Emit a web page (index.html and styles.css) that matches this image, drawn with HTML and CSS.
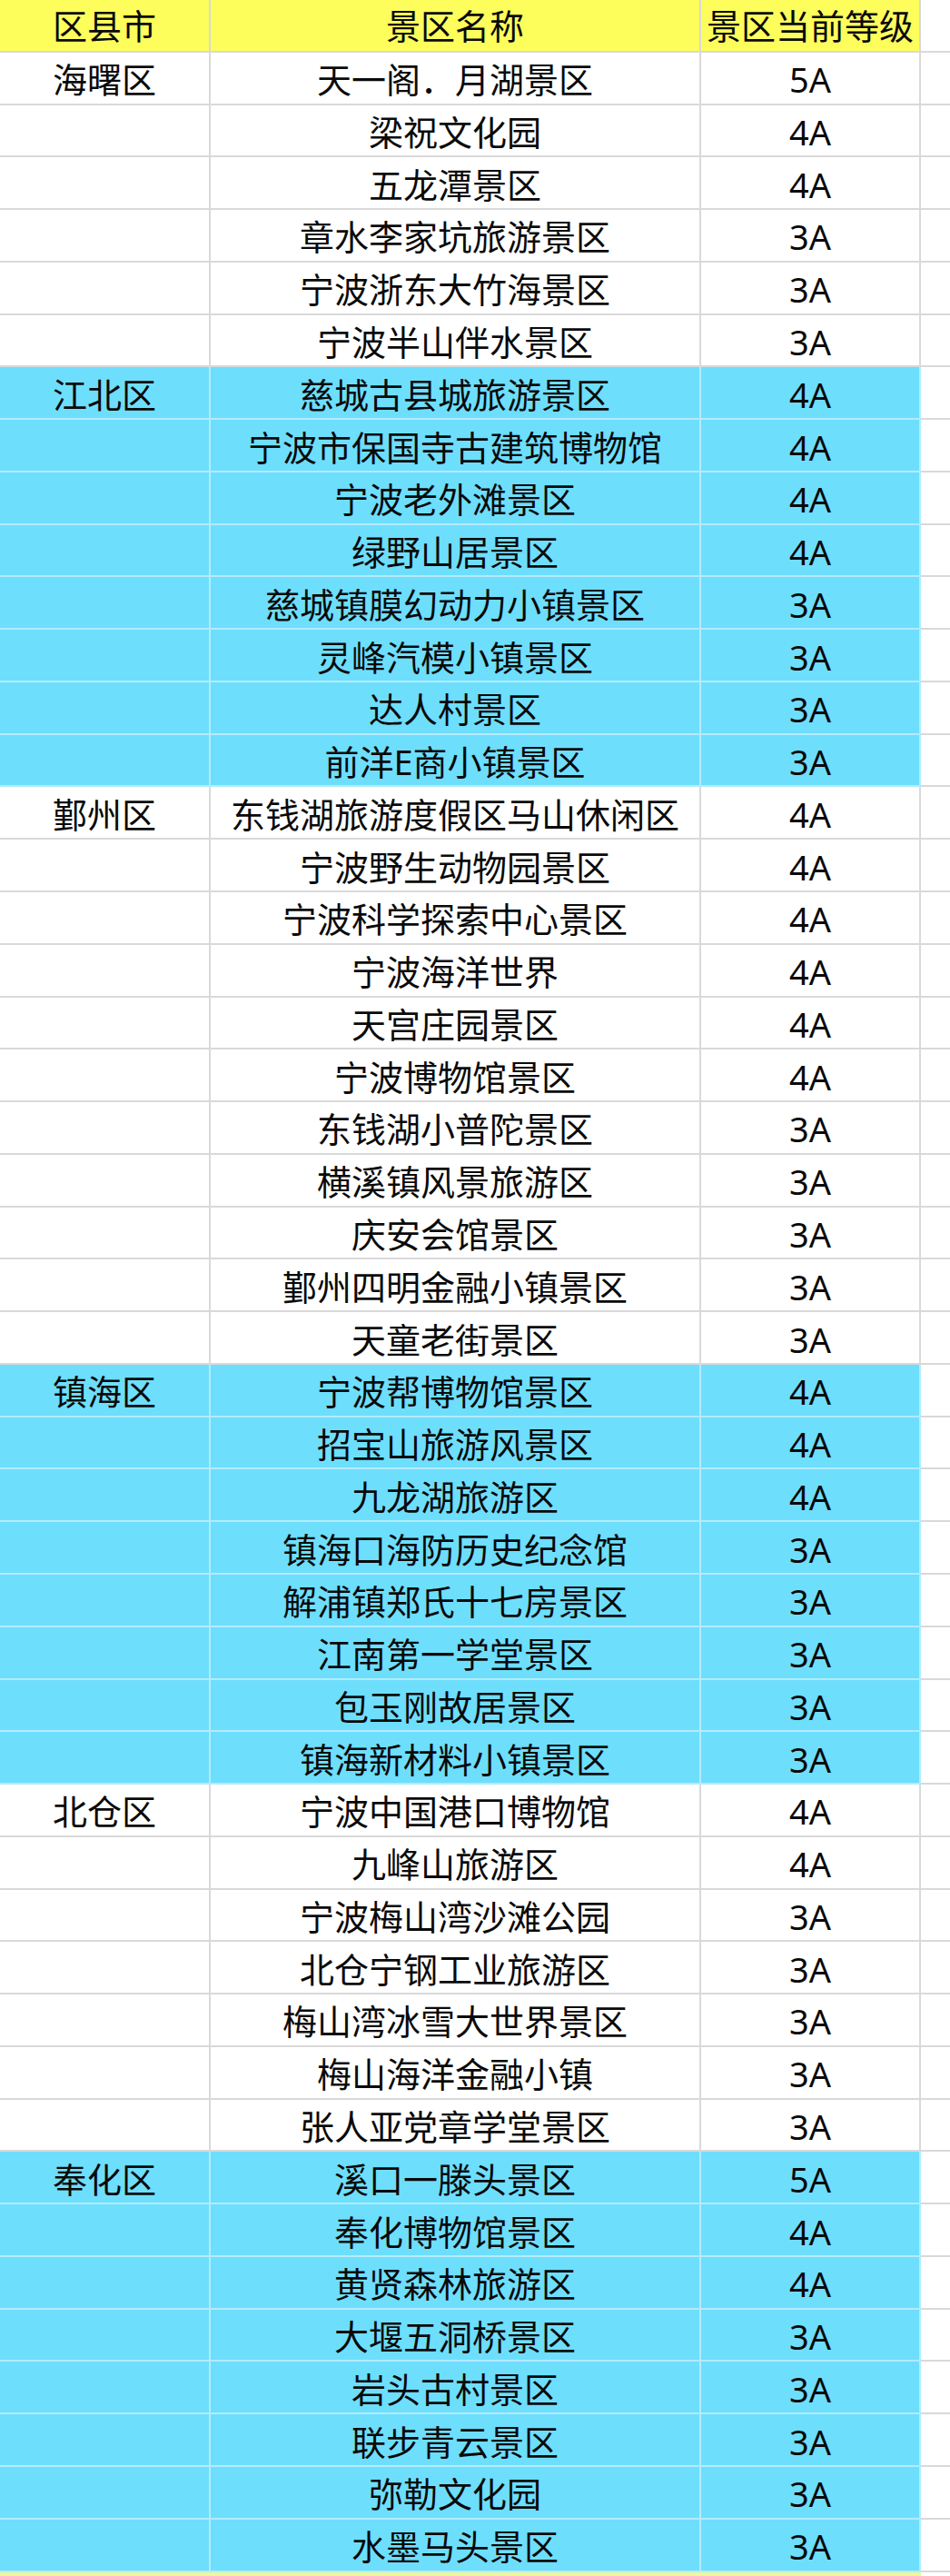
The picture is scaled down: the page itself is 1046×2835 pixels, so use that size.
FILE: index.html
```html
<!DOCTYPE html>
<html lang="zh-CN">
<head>
<meta charset="utf-8">
<title>宁波景区等级</title>
<link rel="stylesheet" href="styles.css">
</head>
<body>
<div class="sheet">
  <div class="row head"><div class="c">区县市</div><div class="c">景区名称</div><div class="c">景区当前等级</div><div class="c e"></div></div>

  <div class="row"><div class="c">海曙区</div><div class="c">天一阁．月湖景区</div><div class="c">5A</div><div class="c e"></div></div>
  <div class="row"><div class="c"></div><div class="c">梁祝文化园</div><div class="c">4A</div><div class="c e"></div></div>
  <div class="row"><div class="c"></div><div class="c">五龙潭景区</div><div class="c">4A</div><div class="c e"></div></div>
  <div class="row"><div class="c"></div><div class="c">章水李家坑旅游景区</div><div class="c">3A</div><div class="c e"></div></div>
  <div class="row"><div class="c"></div><div class="c">宁波浙东大竹海景区</div><div class="c">3A</div><div class="c e"></div></div>
  <div class="row"><div class="c"></div><div class="c">宁波半山伴水景区</div><div class="c">3A</div><div class="c e"></div></div>

  <div class="row blue"><div class="c">江北区</div><div class="c">慈城古县城旅游景区</div><div class="c">4A</div><div class="c e"></div></div>
  <div class="row blue"><div class="c"></div><div class="c">宁波市保国寺古建筑博物馆</div><div class="c">4A</div><div class="c e"></div></div>
  <div class="row blue"><div class="c"></div><div class="c">宁波老外滩景区</div><div class="c">4A</div><div class="c e"></div></div>
  <div class="row blue"><div class="c"></div><div class="c">绿野山居景区</div><div class="c">4A</div><div class="c e"></div></div>
  <div class="row blue"><div class="c"></div><div class="c">慈城镇膜幻动力小镇景区</div><div class="c">3A</div><div class="c e"></div></div>
  <div class="row blue"><div class="c"></div><div class="c">灵峰汽模小镇景区</div><div class="c">3A</div><div class="c e"></div></div>
  <div class="row blue"><div class="c"></div><div class="c">达人村景区</div><div class="c">3A</div><div class="c e"></div></div>
  <div class="row blue"><div class="c"></div><div class="c">前洋E商小镇景区</div><div class="c">3A</div><div class="c e"></div></div>

  <div class="row"><div class="c">鄞州区</div><div class="c">东钱湖旅游度假区马山休闲区</div><div class="c">4A</div><div class="c e"></div></div>
  <div class="row"><div class="c"></div><div class="c">宁波野生动物园景区</div><div class="c">4A</div><div class="c e"></div></div>
  <div class="row"><div class="c"></div><div class="c">宁波科学探索中心景区</div><div class="c">4A</div><div class="c e"></div></div>
  <div class="row"><div class="c"></div><div class="c">宁波海洋世界</div><div class="c">4A</div><div class="c e"></div></div>
  <div class="row"><div class="c"></div><div class="c">天宫庄园景区</div><div class="c">4A</div><div class="c e"></div></div>
  <div class="row"><div class="c"></div><div class="c">宁波博物馆景区</div><div class="c">4A</div><div class="c e"></div></div>
  <div class="row"><div class="c"></div><div class="c">东钱湖小普陀景区</div><div class="c">3A</div><div class="c e"></div></div>
  <div class="row"><div class="c"></div><div class="c">横溪镇风景旅游区</div><div class="c">3A</div><div class="c e"></div></div>
  <div class="row"><div class="c"></div><div class="c">庆安会馆景区</div><div class="c">3A</div><div class="c e"></div></div>
  <div class="row"><div class="c"></div><div class="c">鄞州四明金融小镇景区</div><div class="c">3A</div><div class="c e"></div></div>
  <div class="row"><div class="c"></div><div class="c">天童老街景区</div><div class="c">3A</div><div class="c e"></div></div>

  <div class="row blue"><div class="c">镇海区</div><div class="c">宁波帮博物馆景区</div><div class="c">4A</div><div class="c e"></div></div>
  <div class="row blue"><div class="c"></div><div class="c">招宝山旅游风景区</div><div class="c">4A</div><div class="c e"></div></div>
  <div class="row blue"><div class="c"></div><div class="c">九龙湖旅游区</div><div class="c">4A</div><div class="c e"></div></div>
  <div class="row blue"><div class="c"></div><div class="c">镇海口海防历史纪念馆</div><div class="c">3A</div><div class="c e"></div></div>
  <div class="row blue"><div class="c"></div><div class="c">解浦镇郑氏十七房景区</div><div class="c">3A</div><div class="c e"></div></div>
  <div class="row blue"><div class="c"></div><div class="c">江南第一学堂景区</div><div class="c">3A</div><div class="c e"></div></div>
  <div class="row blue"><div class="c"></div><div class="c">包玉刚故居景区</div><div class="c">3A</div><div class="c e"></div></div>
  <div class="row blue"><div class="c"></div><div class="c">镇海新材料小镇景区</div><div class="c">3A</div><div class="c e"></div></div>

  <div class="row"><div class="c">北仓区</div><div class="c">宁波中国港口博物馆</div><div class="c">4A</div><div class="c e"></div></div>
  <div class="row"><div class="c"></div><div class="c">九峰山旅游区</div><div class="c">4A</div><div class="c e"></div></div>
  <div class="row"><div class="c"></div><div class="c">宁波梅山湾沙滩公园</div><div class="c">3A</div><div class="c e"></div></div>
  <div class="row"><div class="c"></div><div class="c">北仓宁钢工业旅游区</div><div class="c">3A</div><div class="c e"></div></div>
  <div class="row"><div class="c"></div><div class="c">梅山湾冰雪大世界景区</div><div class="c">3A</div><div class="c e"></div></div>
  <div class="row"><div class="c"></div><div class="c">梅山海洋金融小镇</div><div class="c">3A</div><div class="c e"></div></div>
  <div class="row"><div class="c"></div><div class="c">张人亚党章学堂景区</div><div class="c">3A</div><div class="c e"></div></div>

  <div class="row blue"><div class="c">奉化区</div><div class="c">溪口一滕头景区</div><div class="c">5A</div><div class="c e"></div></div>
  <div class="row blue"><div class="c"></div><div class="c">奉化博物馆景区</div><div class="c">4A</div><div class="c e"></div></div>
  <div class="row blue"><div class="c"></div><div class="c">黄贤森林旅游区</div><div class="c">4A</div><div class="c e"></div></div>
  <div class="row blue"><div class="c"></div><div class="c">大堰五洞桥景区</div><div class="c">3A</div><div class="c e"></div></div>
  <div class="row blue"><div class="c"></div><div class="c">岩头古村景区</div><div class="c">3A</div><div class="c e"></div></div>
  <div class="row blue"><div class="c"></div><div class="c">联步青云景区</div><div class="c">3A</div><div class="c e"></div></div>
  <div class="row blue"><div class="c"></div><div class="c">弥勒文化园</div><div class="c">3A</div><div class="c e"></div></div>
  <div class="row blue"><div class="c"></div><div class="c">水墨马头景区</div><div class="c">3A</div><div class="c e"></div></div>

  <div class="row tail"><div class="c"></div><div class="c"></div><div class="c"></div><div class="c e"></div></div>
</div>
</body>
</html>
```

FILE: styles.css
```css
html, body {
  margin: 0;
  padding: 0;
  background: #ffffff;
}

.sheet {
  width: 1046px;
  height: 2835px;
  overflow: hidden;
  font-family: "Noto Sans", "Noto Sans CJK SC", sans-serif;
  font-size: 38px;
  color: #0a0a0a;
}

.row {
  display: grid;
  grid-template-columns: 232px 540px 242px 32px;
  height: 57.78px;
}

.c {
  box-sizing: border-box;
  border-right: 2px solid #d9d9d9;
  border-bottom: 2px solid #d9d9d9;
  display: flex;
  align-items: center;
  justify-content: center;
  white-space: nowrap;
  line-height: 1;
  padding-top: 3px;
}

.c.e {
  border-right: none;
  background: #ffffff;
}

.head .c {
  background: #fdfd5c;
  padding-top: 0;
}

.head .c.e {
  background: #ffffff;
}

.blue .c {
  background: #6edefd;
  border-color: #b4ebfc;
}

.blue .c.e {
  background: #ffffff;
  border-bottom-color: #d9d9d9;
}

.tail .c {
  background: #eef79a;
  border: none;
}

.tail .c.e {
  background: #ffffff;
}
```
